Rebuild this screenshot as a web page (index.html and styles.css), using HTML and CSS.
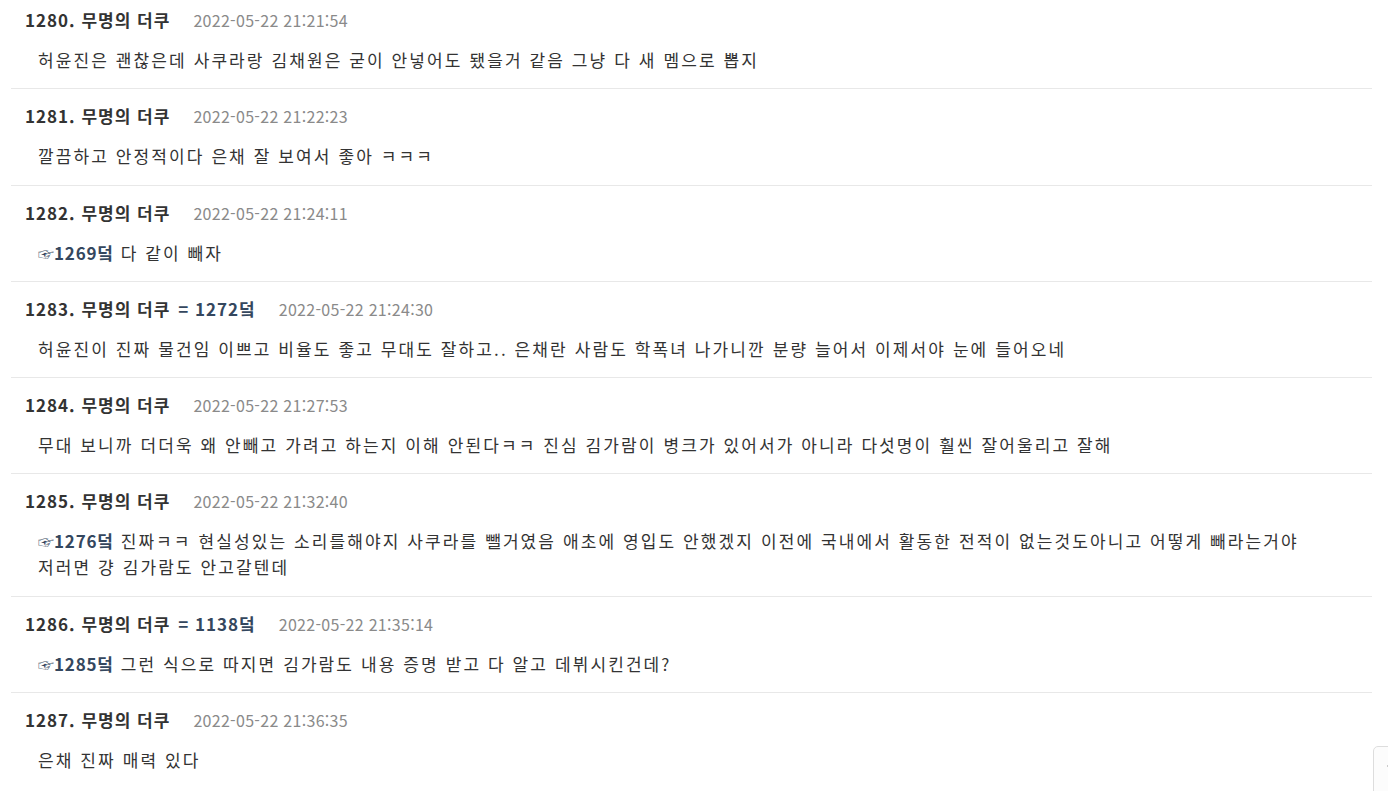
FILE: index.html
```html
<!DOCTYPE html>
<html lang="ko">
<head>
<meta charset="utf-8">
<link rel="stylesheet" href="styles.css">
</head>
<body>
<div class="list">
  <div class="row">
    <div class="head"><span class="name">1280. 무명의 더쿠</span><span class="date">2022-05-22 21:21:54</span></div>
    <div class="body">허윤진은 괜찮은데 사쿠라랑 김채원은 굳이 안넣어도 됐을거 같음 그냥 다 새 멤으로 뽑지</div>
  </div>
  <div class="row">
    <div class="head"><span class="name">1281. 무명의 더쿠</span><span class="date">2022-05-22 21:22:23</span></div>
    <div class="body">깔끔하고 안정적이다 은채 잘 보여서 좋아 ㅋㅋㅋ</div>
  </div>
  <div class="row">
    <div class="head"><span class="name">1282. 무명의 더쿠</span><span class="date">2022-05-22 21:24:11</span></div>
    <div class="body"><span class="ref"><span class="hand">☞</span>1269덬</span> 다 같이 빼자</div>
  </div>
  <div class="row">
    <div class="head"><span class="name">1283. 무명의 더쿠 <span class="reply">= 1272덬</span></span><span class="date">2022-05-22 21:24:30</span></div>
    <div class="body">허윤진이 진짜 물건임 이쁘고 비율도 좋고 무대도 잘하고.. 은채란 사람도 학폭녀 나가니깐 분량 늘어서 이제서야 눈에 들어오네</div>
  </div>
  <div class="row">
    <div class="head"><span class="name">1284. 무명의 더쿠</span><span class="date">2022-05-22 21:27:53</span></div>
    <div class="body">무대 보니까 더더욱 왜 안빼고 가려고 하는지 이해 안된다ㅋㅋ 진심 김가람이 병크가 있어서가 아니라 다섯명이 훨씬 잘어울리고 잘해</div>
  </div>
  <div class="row">
    <div class="head"><span class="name">1285. 무명의 더쿠</span><span class="date">2022-05-22 21:32:40</span></div>
    <div class="body"><span class="ref"><span class="hand">☞</span>1276덬</span> 진짜ㅋㅋ 현실성있는 소리를해야지 사쿠라를 뺄거였음 애초에 영입도 안했겠지 이전에 국내에서 활동한 전적이 없는것도아니고 어떻게 빼라는거야<br>저러면 걍 김가람도 안고갈텐데</div>
  </div>
  <div class="row">
    <div class="head"><span class="name">1286. 무명의 더쿠 <span class="reply">= 1138덬</span></span><span class="date">2022-05-22 21:35:14</span></div>
    <div class="body"><span class="ref"><span class="hand">☞</span>1285덬</span> 그런 식으로 따지면 김가람도 내용 증명 받고 다 알고 데뷔시킨건데?</div>
  </div>
  <div class="row">
    <div class="head"><span class="name">1287. 무명의 더쿠</span><span class="date">2022-05-22 21:36:35</span></div>
    <div class="body">은채 진짜 매력 있다</div>
  </div>
</div>
<div class="float-btn"><span class="dot"></span></div>
</body>
</html>
```

FILE: styles.css
```css
html, body {
  margin: 0;
  padding: 0;
  background: #fff;
  overflow: hidden;
}
body {
  font-family: "Noto Sans CJK KR", "Noto Sans", sans-serif;
  color: #333;
}
.list {
  margin: -8px 16px 0 11px;
}
.row {
  border-top: 1px solid #e8e8e8;
  padding: 15px 0 15.3px 14px;
}
.head {
  font-size: 17px;
  line-height: 24px;
  height: 24px;
  display: flex;
  align-items: baseline;
  white-space: nowrap;
}
.name {
  font-weight: 700;
  color: #333;
  letter-spacing: 1px;
}
.reply {
  color: #34475e;
  margin-left: 2px;
}
.date {
  margin-left: 23px;
  font-size: 16px;
  letter-spacing: 0.3px;
  color: #8a8a8a;
}
.body {
  margin-top: 15px;
  padding-left: 13px;
  font-size: 17px;
  letter-spacing: 2.1px;
  line-height: 26px;
  color: #333;
}
.ref {
  font-weight: 700;
  color: #34475e;
  letter-spacing: 0.8px;
  line-height: 1;
}
.hand {
  font-weight: 400;
  font-size: 16px;
  letter-spacing: 0;
  line-height: 1;
}
.float-btn {
  position: fixed;
  left: 1373px;
  top: 746px;
  width: 40px;
  height: 60px;
  border: 1px solid #ddd;
  border-radius: 5px;
  background: #fcfcfc;
}
.dot {
  position: absolute;
  left: 13px;
  top: 18px;
  width: 2px;
  height: 2px;
  background: #ccc;
}
```
